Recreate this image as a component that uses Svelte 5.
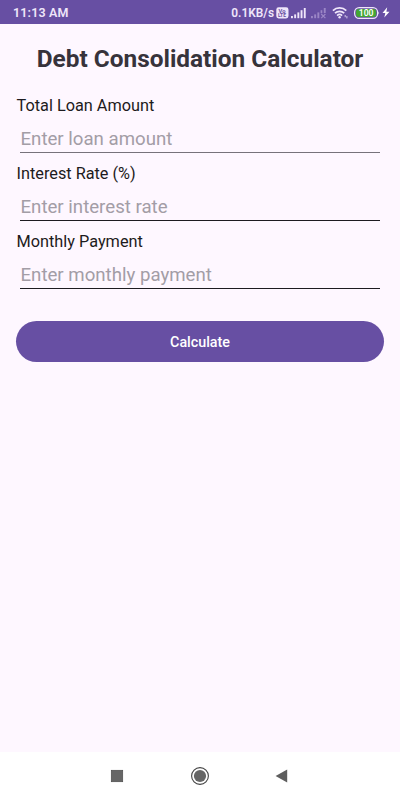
<script lang="ts">
  interface Field {
    id: string;
    label: string;
    hint: string;
  }

  const fields: Field[] = [
    { id: 'loan', label: 'Total Loan Amount', hint: 'Enter loan amount' },
    { id: 'rate', label: 'Interest Rate (%)', hint: 'Enter interest rate' },
    { id: 'payment', label: 'Monthly Payment', hint: 'Enter monthly payment' },
  ];

  let values = $state<Record<string, string>>({ loan: '', rate: '', payment: '' });
</script>

<div class="screen">
  <header class="status">
    <span class="time">11:13 AM</span>
    <span class="speed">0.1KB/s</span>
    <svg class="volte" width="13" height="12" viewBox="0 0 13 12">
      <rect x="0.3" y="0.3" width="12.2" height="11.2" rx="2.4" fill="#efe6fa" />
      <text x="2.6" y="5.6" font-size="5.8">Vo</text>
      <text x="1.9" y="10.3" font-size="5">LTE</text>
    </svg>
    <svg class="signal" width="15" height="12" viewBox="0 0 15 12" fill="#efe6fa">
      <rect x="0" y="9" width="1.9" height="2.2" />
      <rect x="3.2" y="7.4" width="1.9" height="3.8" />
      <rect x="6.4" y="5.4" width="1.9" height="5.8" />
      <rect x="9.6" y="3.2" width="1.9" height="8" />
      <rect x="12.8" y="1" width="1.9" height="10.2" />
    </svg>
    <svg class="signal off" width="16" height="12" viewBox="0 0 16 12" fill="#9b86c6">
      <rect x="0" y="9" width="1.9" height="2.2" />
      <rect x="3.2" y="7.4" width="1.9" height="3.8" />
      <rect x="6.4" y="5.4" width="1.9" height="5.8" />
      <rect x="9.6" y="3.2" width="1.7" height="3" />
      <rect x="12.8" y="1" width="1.9" height="5" />
      <path d="M10.2 7l4.2 4.2M14.4 7l-4.2 4.2" stroke="#9b86c6" stroke-width="1.2" />
    </svg>
    <svg class="wifi" width="17" height="13" viewBox="0 0 17 13" fill="none" stroke="#efe6fa" stroke-width="1.7">
      <path d="M0.9 4.6a9.6 9.6 0 0 1 13.4 0" />
      <path d="M3 7.2a6.5 6.5 0 0 1 9.2 0" />
      <path d="M5.1 9.6a3.6 3.6 0 0 1 5 0" />
      <circle cx="7.6" cy="11.2" r="1.2" fill="#efe6fa" stroke="none" />
      <path d="M13.2 9v2.2M14.9 10v2.4" stroke-width="0.8" />
    </svg>
    <svg class="battery" width="26" height="12" viewBox="0 0 26 12">
      <rect x="0.6" y="0.6" width="23" height="10.8" rx="4.6" fill="none" stroke="#efe6fa" stroke-width="1.2" />
      <rect x="2" y="2" width="20.2" height="8" rx="3" fill="#43a634" />
      <path d="M24.4 4.2q1.3 1.8 0 3.6z" fill="#efe6fa" />
      <text x="12.1" y="9.1" font-size="8.6" text-anchor="middle">100</text>
    </svg>
    <svg class="bolt" width="8" height="11" viewBox="0 0 8 11">
      <path d="M5.2 0.3L0.5 6h2.8L2.3 10.6L7.5 4.7H4.4z" fill="#fff" />
    </svg>
  </header>

  <main>
    <h1>Debt Consolidation Calculator</h1>
    {#each fields as field (field.id)}
      <div class="field {field.id}">
        <label for={field.id}>{field.label}</label>
        <input id={field.id} placeholder={field.hint} inputmode="decimal" bind:value={values[field.id]} />
      </div>
    {/each}
    <button type="button">Calculate</button>
  </main>

  <nav>
    <svg width="14" height="14" viewBox="0 0 14 14" aria-label="Recents">
      <rect x="1.3" y="1.3" width="11.4" height="11.4" fill="#666" stroke="#4c4c4c" stroke-width="0.7" />
    </svg>
    <svg width="20" height="20" viewBox="0 0 20 20" aria-label="Home">
      <circle cx="10" cy="10" r="8.4" fill="none" stroke="#444" stroke-width="1.1" />
      <circle cx="10" cy="10" r="6.1" fill="#666" />
    </svg>
    <svg width="14" height="14" viewBox="0 0 14 14" aria-label="Back">
      <path d="M0.6 7L12.2 0.4v13.2z" fill="#5e5e5e" />
    </svg>
  </nav>
</div>

<style>
  :global(body) {
    margin: 0;
  }
  .screen {
    display: flex;
    flex-direction: column;
    width: 400px;
    height: 800px;
    overflow: hidden;
    background: #fef7ff;
    font-family: Roboto, sans-serif;
  }
  .status {
    display: flex;
    align-items: center;
    box-sizing: border-box;
    height: 24px;
    padding: 1px 10px 0 13px;
    background: #674fa3;
    color: #efe6fa;
    font-weight: 600;
  }
  .status svg {
    flex: none;
  }
  .time {
    flex: 1;
    font-size: 12.5px;
    letter-spacing: 0.15px;
  }
  .speed {
    font-size: 11.9px;
  }
  .volte {
    margin-left: 2px;
  }
  .volte text {
    fill: #674fa3;
    font-weight: 700;
  }
  .signal {
    margin-left: 2px;
  }
  .signal.off {
    margin-left: 5px;
  }
  .wifi {
    margin-left: 5px;
  }
  .battery {
    margin-left: 5px;
  }
  .battery text {
    fill: #fff;
    font-weight: 600;
  }
  .bolt {
    margin-left: 2px;
  }
  main {
    display: flex;
    flex: 1;
    flex-direction: column;
    padding: 20px 16px 0;
  }
  h1 {
    margin: 0 0 21px;
    color: #37333b;
    font-size: 24.4px;
    font-weight: 700;
    line-height: 30px;
    text-align: center;
    white-space: nowrap;
  }
  .field {
    display: flex;
    flex-direction: column;
    height: 68px;
  }
  label {
    padding-left: 0.5px;
    color: #1d1b20;
    font-size: 16.3px;
    line-height: 21px;
  }
  input {
    box-sizing: border-box;
    height: 27px;
    margin: 10px 4px 0;
    padding: 0 0 0 0.5px;
    border: 0;
    border-bottom: 1px solid #1d1b20;
    border-radius: 0;
    outline: 0;
    background: none;
    color: #1d1b20;
    font: 18.65px Roboto, sans-serif;
  }
  .loan input {
    border-bottom-color: #77727b;
  }
  input::placeholder {
    color: #a39da6;
    opacity: 1;
  }
  button {
    height: 41px;
    margin-top: 22px;
    padding: 1px 0 0;
    border: 0;
    border-radius: 21px;
    background: #674fa3;
    color: #fff;
    font: 500 14.3px Roboto, sans-serif;
  }
  nav {
    display: flex;
    align-items: center;
    justify-content: space-between;
    box-sizing: border-box;
    height: 48px;
    padding: 0 111px 0 110px;
    background: #fff;
  }
</style>
